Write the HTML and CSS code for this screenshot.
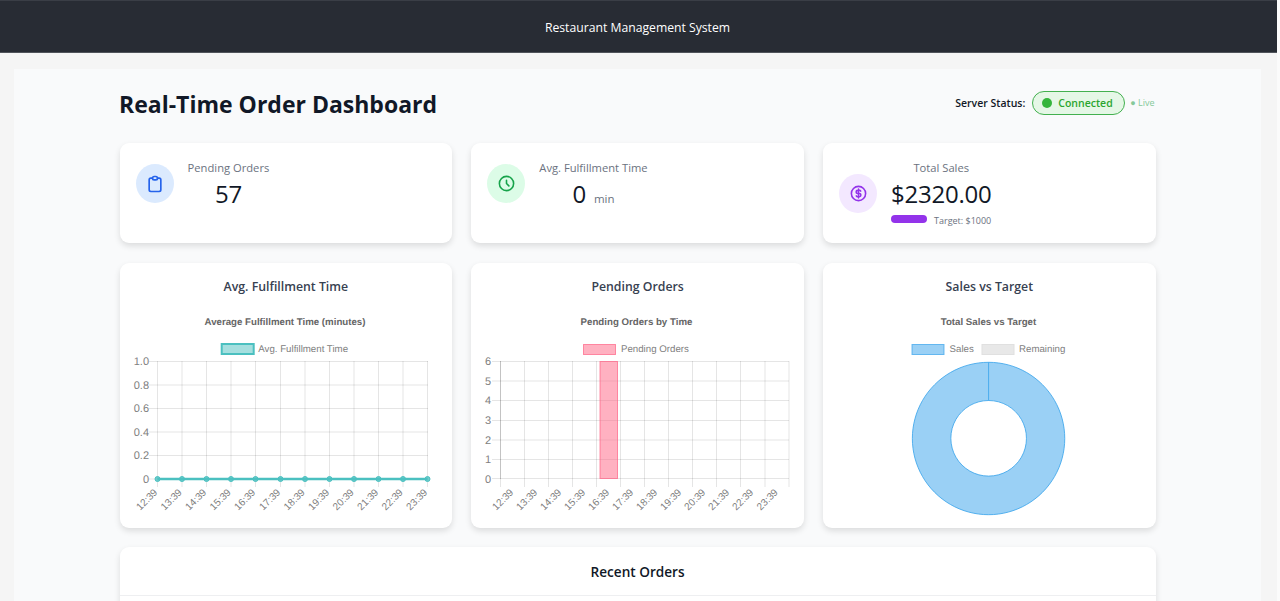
FILE: index.html
```html
<!DOCTYPE html>
<html lang="en">
  <head>
    <meta charset="UTF-8" />
    <meta name="viewport" content="width=device-width, initial-scale=1.0" />
    <title>Restaurant Management System</title>
    <link rel="stylesheet" href="styles.css">
  </head>
  <body>
    <header class="topbar">Restaurant Management System</header>
    <main class="page">
      <div class="container">
        <div class="page-head">
          <h1>Real-Time Order Dashboard</h1>
          <div class="server-status">
            <span class="server-label">Server Status:</span>
            <span class="pill"><span class="pill-dot"></span>Connected</span>
            <span class="live">● Live</span>
          </div>
        </div>

        <section class="grid stats">
          <div class="card stat stat-top">
            <div class="stat-icon icon-blue">
              <svg viewBox="0 0 24 24" width="20" height="20" fill="none" stroke="currentColor" stroke-width="2" stroke-linecap="round" stroke-linejoin="round">
                <path d="M9 5H7a2 2 0 0 0-2 2v12a2 2 0 0 0 2 2h10a2 2 0 0 0 2-2V7a2 2 0 0 0-2-2h-2" />
                <path d="M9 5a2 2 0 0 1 2-2h2a2 2 0 0 1 2 2v0a2 2 0 0 1-2 2h-2a2 2 0 0 1-2-2z" />
              </svg>
            </div>
            <div class="stat-body">
              <p class="stat-label">Pending Orders</p>
              <p class="stat-value">57</p>
            </div>
          </div>
          <div class="card stat stat-top">
            <div class="stat-icon icon-green">
              <svg viewBox="0 0 24 24" width="19" height="19" fill="none" stroke="currentColor" stroke-width="2" stroke-linecap="round" stroke-linejoin="round">
                <circle cx="12" cy="12" r="9" />
                <path d="M12 8v4l3 3" />
              </svg>
            </div>
            <div class="stat-body">
              <p class="stat-label">Avg. Fulfillment Time</p>
              <p class="stat-value">0 <span class="stat-unit">min</span></p>
            </div>
          </div>
          <div class="card stat">
            <div class="stat-icon icon-purple">
              <svg viewBox="0 0 24 24" width="19" height="19" fill="none" stroke="currentColor" stroke-width="2" stroke-linecap="round" stroke-linejoin="round">
                <circle cx="12" cy="12" r="9" />
                <path d="M14.8 9A2 2 0 0 0 13 8h-2a2 2 0 0 0 0 4h2a2 2 0 0 1 0 4h-2a2 2 0 0 1-1.8-1M12 6.5v11" />
              </svg>
            </div>
            <div class="stat-body">
              <p class="stat-label">Total Sales</p>
              <p class="stat-value">$2320.00</p>
              <div class="target">
                <span class="target-bar"></span>
                <span class="target-text">Target: $1000</span>
              </div>
            </div>
          </div>
        </section>

        <section class="grid charts">
          <div class="card chart-card">
            <h3>Avg. Fulfillment Time</h3>
            <svg class="chart" viewBox="0 0 300 212">
              <text class="chart-title" x="149" y="18.5">Average Fulfillment Time (minutes)</text>
              <rect x="85.7" y="38" width="32" height="10" fill="rgba(75,192,192,0.5)" stroke="#4bc0c0" stroke-width="2" />
              <text class="legend" x="122.3" y="45.5">Avg. Fulfillment Time</text>
              <path class="grid-line" d="M13 55.5H292M13 79H292M13 102.5H292M13 126H292M13 149.5H292M13 173H292" />
              <path class="grid-line" d="M21.5 55V181M46 55V181M70.5 55V181M95 55V181M119.5 55V181M144.5 55V181M169 55V181M193.5 55V181M218 55V181M242.5 55V181M267 55V181M291.5 55V181" />
              <text class="tick-y" x="13" y="59">1.0</text>
              <text class="tick-y" x="13" y="82.5">0.8</text>
              <text class="tick-y" x="13" y="106">0.6</text>
              <text class="tick-y" x="13" y="129.5">0.4</text>
              <text class="tick-y" x="13" y="153">0.2</text>
              <text class="tick-y" x="13" y="176.5">0</text>
              <path d="M21.5 173H291.5" stroke="#4bc0c0" stroke-width="2.5" />
              <g fill="rgba(75,192,192,0.8)" stroke="#4bc0c0">
                <circle cx="21.5" cy="173" r="2.5" />
                <circle cx="46" cy="173" r="2.5" />
                <circle cx="70.5" cy="173" r="2.5" />
                <circle cx="95" cy="173" r="2.5" />
                <circle cx="119.5" cy="173" r="2.5" />
                <circle cx="144.5" cy="173" r="2.5" />
                <circle cx="169" cy="173" r="2.5" />
                <circle cx="193.5" cy="173" r="2.5" />
                <circle cx="218" cy="173" r="2.5" />
                <circle cx="242.5" cy="173" r="2.5" />
                <circle cx="267" cy="173" r="2.5" />
                <circle cx="291.5" cy="173" r="2.5" />
              </g>
              <text class="tick-x" transform="translate(22 187) rotate(-45)">12:39</text>
              <text class="tick-x" transform="translate(46.5 187) rotate(-45)">13:39</text>
              <text class="tick-x" transform="translate(71 187) rotate(-45)">14:39</text>
              <text class="tick-x" transform="translate(95.5 187) rotate(-45)">15:39</text>
              <text class="tick-x" transform="translate(120 187) rotate(-45)">16:39</text>
              <text class="tick-x" transform="translate(145 187) rotate(-45)">17:39</text>
              <text class="tick-x" transform="translate(169.5 187) rotate(-45)">18:39</text>
              <text class="tick-x" transform="translate(194 187) rotate(-45)">19:39</text>
              <text class="tick-x" transform="translate(218.5 187) rotate(-45)">20:39</text>
              <text class="tick-x" transform="translate(243 187) rotate(-45)">21:39</text>
              <text class="tick-x" transform="translate(267.5 187) rotate(-45)">22:39</text>
              <text class="tick-x" transform="translate(292 187) rotate(-45)">23:39</text>
            </svg>
          </div>

          <div class="card chart-card">
            <h3>Pending Orders</h3>
            <svg class="chart" viewBox="0 0 300 212">
              <text class="chart-title" x="149.5" y="18.5">Pending Orders by Time</text>
              <rect x="96.5" y="38.5" width="32" height="10" fill="rgba(255,99,132,0.5)" stroke="rgba(255,99,132,0.7)" />
              <text class="legend" x="134" y="45.5">Pending Orders</text>
              <path class="grid-line" d="M5 55.5H302M5 75H302M5 94.5H302M5 114.5H302M5 134H302M5 153.5H302M5 172.5H302" />
              <path class="grid-line" d="M13.5 55V181M37.5 55V181M61.5 55V181M85.5 55V181M109.5 55V181M133.5 55V181M157.5 55V181M181.5 55V181M205.5 55V181M229.5 55V181M253.5 55V181M278 55V181M302 55V181" />
              <path class="axis-line" d="M13.5 55V173" />
              <text class="tick-y" x="4" y="59">6</text>
              <text class="tick-y" x="4" y="78.5">5</text>
              <text class="tick-y" x="4" y="98">4</text>
              <text class="tick-y" x="4" y="118">3</text>
              <text class="tick-y" x="4" y="137.5">2</text>
              <text class="tick-y" x="4" y="157">1</text>
              <text class="tick-y" x="4" y="176.5">0</text>
              <rect x="113" y="55.5" width="17.5" height="117" fill="rgba(255,99,132,0.5)" stroke="rgba(255,99,132,0.7)" />
              <text class="tick-x" transform="translate(27 187) rotate(-45)">12:39</text>
              <text class="tick-x" transform="translate(51 187) rotate(-45)">13:39</text>
              <text class="tick-x" transform="translate(75 187) rotate(-45)">14:39</text>
              <text class="tick-x" transform="translate(99 187) rotate(-45)">15:39</text>
              <text class="tick-x" transform="translate(123 187) rotate(-45)">16:39</text>
              <text class="tick-x" transform="translate(147 187) rotate(-45)">17:39</text>
              <text class="tick-x" transform="translate(171 187) rotate(-45)">18:39</text>
              <text class="tick-x" transform="translate(195 187) rotate(-45)">19:39</text>
              <text class="tick-x" transform="translate(219 187) rotate(-45)">20:39</text>
              <text class="tick-x" transform="translate(243 187) rotate(-45)">21:39</text>
              <text class="tick-x" transform="translate(267 187) rotate(-45)">22:39</text>
              <text class="tick-x" transform="translate(291.5 187) rotate(-45)">23:39</text>
            </svg>
          </div>

          <div class="card chart-card">
            <h3>Sales vs Target</h3>
            <svg class="chart" viewBox="0 0 300 212">
              <text class="chart-title" x="149.5" y="18.5">Total Sales vs Target</text>
              <rect x="73" y="38.5" width="32" height="10" fill="rgba(54,162,235,0.5)" stroke="rgba(54,162,235,0.7)" />
              <text class="legend" x="110.6" y="45.5">Sales</text>
              <rect x="143" y="38.5" width="32" height="10" fill="#e8e8e8" stroke="#e0e0e0" />
              <text class="legend" x="180" y="45.5">Remaining</text>
              <path d="M149.6 56.3A76.2 76.2 0 1 1 149.5 56.3ZM149.6 94.5A37.8 37.8 0 1 0 149.7 94.5Z" fill="rgba(54,162,235,0.5)" stroke="rgba(54,162,235,0.8)" fill-rule="evenodd" />
              <path d="M149.6 56.3V94.5" stroke="rgba(54,162,235,0.8)" />
            </svg>
          </div>
        </section>

        <section class="card orders">
          <h2>Recent Orders</h2>
        </section>
      </div>
    </main>
  </body>
</html>
```

FILE: styles.css
```css
* {
  box-sizing: border-box;
}

body {
  font-family: "Open Sans", "Noto Sans", sans-serif;
  background-color: #f5f5f5;
  border-right: 3px solid #fbfbfb;
  margin: 0;
  padding: 0;
  color: #111827;
}

.topbar {
  height: 53px;
  padding: 1px 2px 0 0;
  background-color: #282c34;
  border-top: 1px solid #3a3e46;
  border-bottom: 1px solid #50545b;
  color: #ffffff;
  font-size: 12.2px;
  display: flex;
  justify-content: center;
  align-items: center;
}

.page {
  margin: 16px 16px 0 14px;
  background-color: #f9fafb;
  padding: 16px 0;
}

.container {
  width: 1036px;
  margin: 0 auto 0 105.6px;
}

.page-head {
  display: flex;
  justify-content: space-between;
  align-items: center;
  height: 37px;
  margin-bottom: 21px;
}

h1 {
  margin: 0 0 0 -0.6px;
  font-size: 23px;
  font-weight: 700;
}

.server-status {
  display: flex;
  align-items: center;
  margin: 0 1px 2px 0;
}

.server-label {
  font-size: 10.5px;
  font-weight: 600;
  margin-right: 7px;
}

.pill {
  display: flex;
  align-items: center;
  height: 24px;
  width: 93px;
  padding-left: 9px;
  background-color: #e5f7e6;
  border: 1px solid #43b04f;
  border-radius: 12px;
  color: #2ba52f;
  font-size: 10.5px;
  font-weight: 600;
  margin-right: 5px;
}

.pill-dot {
  width: 10px;
  height: 10px;
  border-radius: 50%;
  background-color: #35b53c;
  margin-right: 6px;
}

.live {
  font-size: 9px;
  color: #86c99a;
}

.grid {
  display: grid;
  grid-template-columns: repeat(3, 1fr);
  gap: 19.2px;
}

.stats {
  margin-bottom: 20px;
}

.card {
  background-color: #ffffff;
  border-radius: 9px;
  box-shadow: 0 3px 6px rgba(0, 0, 0, 0.12);
}

.stat {
  height: 100px;
  padding: 0 16px;
  display: flex;
  align-items: center;
  gap: 14px;
}

.stat-top {
  align-items: flex-start;
  padding-top: 21px;
}

.stat-icon {
  width: 38px;
  height: 39px;
  border-radius: 50%;
  flex-shrink: 0;
  display: flex;
  justify-content: center;
  align-items: center;
}

.icon-blue {
  background-color: #dbeafe;
  color: #2563eb;
}

.icon-green {
  background-color: #dcfce7;
  color: #16a34a;
}

.icon-purple {
  background-color: #f3e8ff;
  color: #9333ea;
}

.stat-body {
  text-align: center;
}

.stat-top .stat-body {
  margin-top: -4px;
}

.stat-label {
  margin: 0;
  font-size: 11.2px;
  color: #6b7280;
  line-height: 16px;
}

.stat-value {
  margin: 2px 0 0;
  font-size: 24px;
  line-height: 31px;
  letter-spacing: -0.25px;
}

.stat-unit {
  font-size: 11.5px;
  color: #6b7280;
  margin-left: 2px;
  letter-spacing: 0;
}

.target {
  display: flex;
  align-items: flex-start;
  gap: 7px;
  margin-top: 6px;
}

.target-bar {
  width: 36px;
  height: 8px;
  border-radius: 4px;
  background-color: #9333ea;
}

.target-text {
  font-size: 9px;
  line-height: 12px;
  color: #6b7280;
}

.charts {
  margin-bottom: 19px;
}

.chart-card {
  height: 265px;
  padding: 14px 16px 0;
}

h3 {
  margin: 0;
  height: 29px;
  line-height: 20px;
  text-align: center;
  font-size: 12.3px;
  font-weight: 600;
  color: #374151;
}

.chart {
  display: block;
  width: 300px;
  height: 212px;
  overflow: visible;
}

.chart text {
  font-family: "Liberation Sans", Arial, sans-serif;
  text-rendering: geometricPrecision;
  fill: #808080;
}

.chart .chart-title {
  font-size: 9.7px;
  font-weight: 700;
  fill: #666;
  text-anchor: middle;
}

.legend {
  font-size: 9.7px;
}

.tick-y {
  font-size: 11px;
  text-anchor: end;
}

.tick-x {
  font-size: 10px;
  text-anchor: end;
}

.grid-line {
  stroke: rgba(0, 0, 0, 0.1);
  fill: none;
}

.axis-line {
  stroke: rgba(0, 0, 0, 0.15);
  fill: none;
}

.orders {
  height: 120px;
  padding-top: 14px;
  border-radius: 9px 9px 0 0;
}

h2 {
  margin: 0;
  padding-bottom: 12px;
  border-bottom: 1px solid #eeeff1;
  text-align: center;
  font-size: 13.6px;
  font-weight: 600;
  line-height: 22px;
  color: #111827;
}
```
